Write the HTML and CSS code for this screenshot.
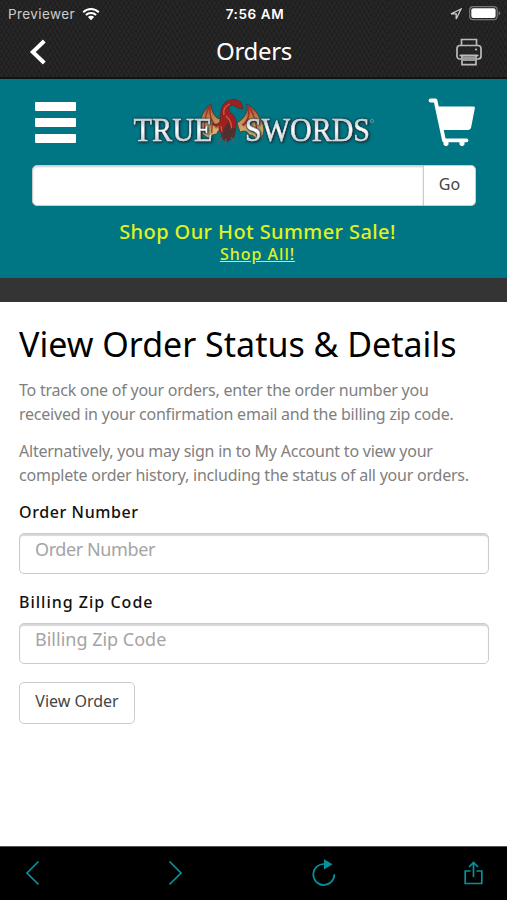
FILE: index.html
```html
<!DOCTYPE html>
<html lang="en">
<head>
    <meta charset="UTF-8">
    <meta name="viewport" content="width=device-width, initial-scale=1.0">
    <title>Orders</title>
    <link rel="stylesheet" href="styles.css">
</head>
<body>
    <header class="app-header">
        <div class="status-bar">
            <div class="status-left">
                <span class="carrier">Previewer</span>
                <svg class="wifi" width="18" height="14" viewBox="0 0 18 14">
                    <path d="M1.2 5.2a11 11 0 0 1 15.6 0M3.9 8a7.2 7.2 0 0 1 10.2 0" fill="none" stroke="#fff" stroke-width="2"/>
                    <path d="M9 13.2 5.9 10.1a4.4 4.4 0 0 1 6.2 0z" fill="#fff"/>
                </svg>
            </div>
            <span class="time">7:56 AM</span>
            <div class="status-right">
                <svg width="12" height="12" viewBox="0 0 12 12">
                    <path d="M11 1 1 5.8h5.2V11z" fill="none" stroke="#ccc" stroke-width="1.3"/>
                </svg>
                <svg width="32" height="15" viewBox="0 0 32 15">
                    <rect x=".7" y=".7" width="27.5" height="13" rx="3.5" fill="none" stroke="#777" stroke-width="1.2"/>
                    <rect x="2.3" y="2.3" width="24.3" height="9.8" rx="2" fill="#fff"/>
                    <path d="M29.6 5v4.5q1.6-.6 1.6-2.2T29.6 5" fill="#777"/>
                </svg>
            </div>
        </div>
        <div class="title-bar">
            <svg class="back" width="18" height="26" viewBox="0 0 18 26">
                <path d="M15.3 2 3.8 13l11.5 11" fill="none" stroke="#fff" stroke-width="4"/>
            </svg>
            <h1 class="page-title">Orders</h1>
            <svg class="printer" width="26" height="28" viewBox="0 0 26 28" fill="none" stroke="#bbb" stroke-width="1.7">
                <path d="M5.5 7V1.5h15V7M5.5 21H3.8Q1 21 1 18v-7.500Q1 7.500 4 7.500h18q3 0 3 3V18q0 3-2.800 3h-1.700"/>
                <path d="M3.500 17.500h19"/>
                <path d="M6 17.500h14v9.200H6z"/>
                <path d="M7 18.500h12v4.500H7z" fill="#999" stroke="none"/>
                <circle cx="20" cy="11.500" r="1.100" fill="#bbb" stroke="none"/>
            </svg>
        </div>
    </header>

    <section class="store-header">
        <div class="store-top">
            <svg class="menu" width="41" height="41" viewBox="0 0 41 41" fill="#fff">
                <rect width="41" height="9" rx="1"/>
                <rect y="16" width="41" height="9" rx="1"/>
                <rect y="32" width="41" height="9" rx="1"/>
            </svg>
            <svg class="logo" width="250" height="60" viewBox="0 0 250 60">
                <defs>
                    <linearGradient id="silver" x1="0" y1="0" x2="0" y2="1">
                        <stop offset=".2" stop-color="#b4c2ca"/>
                        <stop offset=".5" stop-color="#fff"/>
                        <stop offset=".8" stop-color="#cdd2d6"/>
                    </linearGradient>
                    <linearGradient id="wing" x1="0" y1="0" x2="0" y2="1">
                        <stop offset="0" stop-color="#9c3128"/>
                        <stop offset=".35" stop-color="#bd8248"/>
                        <stop offset="1" stop-color="#e0ca88"/>
                    </linearGradient>
                </defs>
                <!-- dragon -->
                <g stroke="#503129" stroke-width=".8">
                    <path d="M84 11q-8 6-10 15-3 7 1 15l8 5q1-5 7-5 0-5 6-3l4-10-10-3q-5-4-6-14z" fill="url(#wing)"/>
                    <path d="M120 11q9 5 12 13 7 8 4 18-2 5-7 6-1-7-7-6-2-6-9-3l-3-9q12-7 10-19z" fill="url(#wing)"/>
                    <path d="M83 12q-1 11 3 17m-3-17q-7 13-5 29m9-12q-3 4-2 11m35-28q5 13-5 20m7-18q8 11 8 29m-8-24q0 10-6 14" fill="none" stroke="#a0302b" stroke-width="1.300"/>
                    <path d="M85 30q6 3 8-2 0-5 1-10 1-11 14-12l6 3 2 7-5-1-5-3q-5 0-4 6 9 7 7 15-2 8-9 11-9-3-8-10-5 0-7-4z" fill="#9e2022"/>
                    <path d="M97 22q-2-8 6-11m-4 12q7 6 5 15m-10-5q1 9 5 10m-7-10q-3 3-4 1" fill="none" stroke="#d75b3d" stroke-width="1.200"/>
                    <path d="m96 38 5-9 3 7 5-1-2 9-7 5-6-4z" fill="#53302f"/>
                    <path d="m95 44-5 8m9-6-1 7m6-9 3 6" fill="none" stroke="#565a67" stroke-width="1.500"/>
                </g>
                <g class="logo-text">
                    <text x="6.500" y="47.500" textLength="79" lengthAdjust="spacingAndGlyphs">TRUE</text>
                    <text x="118" y="47.500" textLength="125" lengthAdjust="spacingAndGlyphs">SWORDS</text>
                </g>
                <circle cx="245" cy="28" r="1.600" fill="none" stroke="#6e8f96"/>
            </svg>
            <svg class="cart" width="48" height="49" viewBox="0 0 48 49" fill="#fff">
                <path d="M2.500 2.500H7.500L16 42.300h22.500" fill="none" stroke="#fff" stroke-width="3.800" stroke-linecap="round" stroke-linejoin="round"/>
                <path d="M9.500 8.500h36.200q1.500 0 1.200 1.500l-3.800 19.500q-.5 2.300-2.800 2.500H14.500z"/>
                <path d="M15.500 43h5v3.500q-2.500 3.500-5 0zM31.500 43h5v3.500q-2.500 3.500-5 0z"/>
            </svg>
        </div>
        <form class="search">
            <input class="search-input" type="text" aria-label="Search">
            <button class="search-button" type="button">Go</button>
        </form>
        <div class="promo">
            <div class="promo-title">Shop Our Hot Summer Sale!</div>
            <a class="promo-link" href="#">Shop All!</a>
        </div>
    </section>
    <div class="divider"></div>

    <main class="content">
        <h2 class="heading">View Order Status &amp; Details</h2>
        <p class="intro intro-track">To track one of your orders, enter the order number you received in your confirmation email and the billing zip code.</p>
        <p class="intro">Alternatively, you may sign in to My Account to view your complete order history, including the status of all your orders.</p>
        <form class="order-form">
            <label class="label" for="orderNumber">Order Number</label>
            <input class="field field-order" id="orderNumber" type="text" placeholder="Order Number">
            <label class="label label-zip" for="zipCode">Billing Zip Code</label>
            <input class="field" id="zipCode" type="text" placeholder="Billing Zip Code">
            <button class="submit" type="button">View Order</button>
        </form>
    </main>

    <footer class="toolbar">
        <svg width="15" height="26" viewBox="0 0 15 26"><path d="M13.500 1.500 2 13l11.500 11.500"/></svg>
        <svg width="15" height="26" viewBox="0 0 15 26"><path d="M1.500 1.500 13 13 1.500 24.500"/></svg>
        <svg class="reload" width="24" height="27" viewBox="0 0 24 27">
            <path d="M13 5.100A10.500 10.500 0 1 0 22.300 15.300"/>
            <path d="M12 .2 20.500 5.300 12 10.500z" class="arrow"/>
        </svg>
        <svg class="share" width="19" height="24" viewBox="0 0 19 24"><path d="M6.500 10H1.200v12.500h16.600V10h-5.300M9.500 16V2M5 6l4.500-4.500L14 6"/></svg>
    </footer>
</body>
</html>
```
FILE: styles.css
```css
* {
    box-sizing: border-box;
}

body {
    margin: 0;
    height: 900px;
    display: flex;
    flex-direction: column;
    overflow: hidden;
    font-family: "Noto Sans", sans-serif;
    background-color: #fff;
}

svg {
    display: block;
    flex-shrink: 0;
}

.app-header {
    height: 79px;
    color: #fff;
    border-bottom: 2px solid #0c1415;
    background-color: #262626;
    background-image:
        repeating-linear-gradient(60deg, rgba(0, 0, 0, 0.16) 0 1px, transparent 1px 4px),
        repeating-linear-gradient(-60deg, rgba(0, 0, 0, 0.16) 0 1px, transparent 1px 4px);
}

.status-bar {
    display: grid;
    grid-template-columns: 1fr auto 1fr;
    align-items: center;
    height: 27px;
    padding: 0 6px 0 8px;
    font-family: Inter, sans-serif;
    font-size: 13px;
}

.status-left,
.status-right {
    display: flex;
    align-items: center;
}

.status-left {
    gap: 7px;
}

.carrier {
    color: #ccc;
    font-size: 13.5px;
    letter-spacing: 0.4px;
}

.time {
    margin-right: -1px;
    font-size: 13.5px;
    font-weight: 600;
    letter-spacing: 0.6px;
}

.status-right {
    justify-content: flex-end;
    gap: 7px;
}

.title-bar {
    display: grid;
    grid-template-columns: 1fr auto 1fr;
    align-items: center;
    height: 49px;
    padding: 0 25px 0 29px;
}

.page-title {
    margin: 0 3px 2px 0;
    font-size: 24px;
    line-height: 30px;
    font-weight: 400;
    letter-spacing: -0.3px;
}

.printer {
    justify-self: end;
}

.store-header {
    height: 199px;
    padding: 19px 31px 0 32px;
    background-color: #007584;
}

.store-top {
    display: flex;
    justify-content: space-between;
    height: 67px;
}

.menu {
    margin: 4px 0 0 3px;
}

.logo {
    margin-top: -5px;
    overflow: visible;
}

.logo-text {
    font-family: "Liberation Serif", serif;
    font-size: 33px;
    fill: url(#silver);
    stroke: #e4e9ec;
    stroke-width: 0.5px;
    filter: drop-shadow(0 0 1px #12272e) drop-shadow(1px 1px 1px #12343c);
}

.search {
    display: flex;
    height: 41px;
}

.search-input {
    flex: 1;
    min-width: 0;
    border: 1px solid #ccc;
    border-radius: 5px 0 0 5px;
    box-shadow: inset 0 1px 2px rgba(0, 0, 0, 0.2);
}

.search-button {
    width: 52px;
    padding: 0 0 4px;
    font: 16px "Noto Sans", sans-serif;
    color: #444;
    background-color: #fff;
    border: 1px solid #ccc;
    border-left: 0;
    border-radius: 0 5px 5px 0;
}

.promo {
    padding: 13px 0 0 7px;
    text-align: center;
    color: #e1f21e;
}

.promo-title {
    font-size: 20px;
    line-height: 26px;
    font-weight: 500;
    letter-spacing: 0.4px;
}

.promo-link {
    display: block;
    font-size: 16px;
    line-height: 18px;
    font-weight: 500;
    letter-spacing: 1px;
    color: inherit;
}

.divider {
    height: 24px;
    background-color: #353435;
}

.content {
    flex: 1;
    padding: 18px 18px 0 19px;
}

.heading {
    margin: 0;
    font-size: 34px;
    line-height: 48px;
    font-weight: 400;
    color: #000;
    white-space: nowrap;
}

.intro {
    margin: 0 0 13px;
    font-size: 16px;
    line-height: 24px;
    letter-spacing: -0.23px;
    color: #808080;
}

.intro-track {
    margin-top: 10px;
}

.order-form {
    display: flex;
    flex-direction: column;
    align-items: flex-start;
}

.label {
    height: 33px;
    font-size: 16px;
    line-height: 24px;
    font-weight: 500;
    letter-spacing: 0.6px;
    color: #111;
}

.label-zip {
    margin-top: 16px;
    letter-spacing: 1px;
}

.field {
    width: 100%;
    height: 41px;
    padding: 0 15px 9px;
    font: 18px "Noto Sans", sans-serif;
    border: 1px solid #ccc;
    border-radius: 5px;
    box-shadow: inset 0 2px 1px rgba(0, 0, 0, 0.16);
}

.field-order {
    letter-spacing: -0.4px;
}

.field::placeholder {
    color: #a4a4a4;
}

.submit {
    width: 116px;
    height: 42px;
    margin-top: 18px;
    padding: 0 0 4px;
    font: 16px "Noto Sans", sans-serif;
    color: #444;
    background-color: #fff;
    border: 1px solid #ccc;
    border-radius: 5px;
}

.toolbar {
    display: flex;
    justify-content: space-between;
    align-items: center;
    height: 54px;
    padding: 0 24px 2px 25px;
    border-top: 1px solid #555;
    background-color: #000;
    fill: none;
    stroke: #07919b;
    stroke-width: 1.7;
}

.toolbar .arrow {
    fill: #07919b;
    stroke: none;
}
```
